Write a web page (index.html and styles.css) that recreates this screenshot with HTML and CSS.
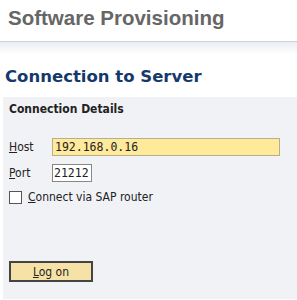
FILE: index.html
```html
<!DOCTYPE html>
<html lang="en">
<head>
  <meta charset="UTF-8" />
  <title>Software Provisioning</title>
  <link rel="stylesheet" href="styles.css">
</head>
<body>
  <div class="header">
    <h1>Software Provisioning</h1>
  </div>
  <div class="page">
    <h2>Connection to Server</h2>
    <div class="panel">
      <div class="panel-title">Connection Details</div>
      <div class="row">
        <label class="lbl"><u>H</u>ost</label>
        <input type="text" class="host" value="192.168.0.16" />
      </div>
      <div class="row">
        <label class="lbl"><u>P</u>ort</label>
        <input type="text" class="port" value="21212" />
      </div>
      <div class="row check">
        <span class="box"></span>
        <span><u>C</u>onnect via SAP router</span>
      </div>
      <button class="logon"><u>L</u>og on</button>
    </div>
  </div>
</body>
</html>
```

FILE: styles.css
```css
body {
  margin: 0;
  background: #fff;
  font-family: 'DejaVu Sans', sans-serif;
  overflow: hidden;
}

.header {
  height: 42px;
  border-bottom: 1px solid #c9d1db;
  box-sizing: border-box;
  padding: 6px 0 0 8px;
}

h1 {
  margin: 0;
  font-family: 'Liberation Sans', Arial, sans-serif;
  font-size: 20.5px;
  font-weight: bold;
  color: #666;
}

.page {
  background: linear-gradient(#e9edf2, #fff 12px);
  padding: 24px 0 0 3px;
}

h2 {
  margin: 0 0 0 2px;
  font-size: 16.5px;
  font-weight: bold;
  color: #15396b;
  line-height: 22px;
}

.panel {
  margin-top: 9px;
  background: #f0f2f6;
  padding: 5px 6px 0;
  height: 202px;
  box-sizing: border-box;
}

.panel-title {
  font-family: 'DejaVu Sans Condensed', 'DejaVu Sans', sans-serif;
  font-size: 12px;
  font-weight: bold;
  color: #222;
  margin-bottom: 22px;
}

.row {
  display: flex;
  align-items: center;
  font-family: 'DejaVu Sans Condensed', 'DejaVu Sans', sans-serif;
  font-size: 12px;
  color: #222;
  margin-bottom: 8px;
}

.lbl {
  width: 43px;
}

input {
  font-family: 'DejaVu Sans Mono', monospace;
  font-size: 11.5px;
  height: 18px;
  box-sizing: border-box;
  padding: 0 2px;
  margin: 0;
  color: #222;
}

.host {
  width: 228px;
  background: #ffe99b;
  border: 1px solid #b5b08c;
}

.port {
  width: 40px;
  padding: 0 1px;
  background: #fff;
  border: 1px solid #888;
}

.check {
  gap: 6px;
}

.box {
  width: 11px;
  height: 11px;
  border: 1px solid #555;
  background: #fff;
}

.logon {
  margin-top: 49px;
  width: 84px;
  height: 21px;
  background: #f6e2a6;
  border: 2px solid #444;
  font-family: 'DejaVu Sans Condensed', 'DejaVu Sans', sans-serif;
  font-size: 12px;
  color: #222;
  padding: 0;
}
```
